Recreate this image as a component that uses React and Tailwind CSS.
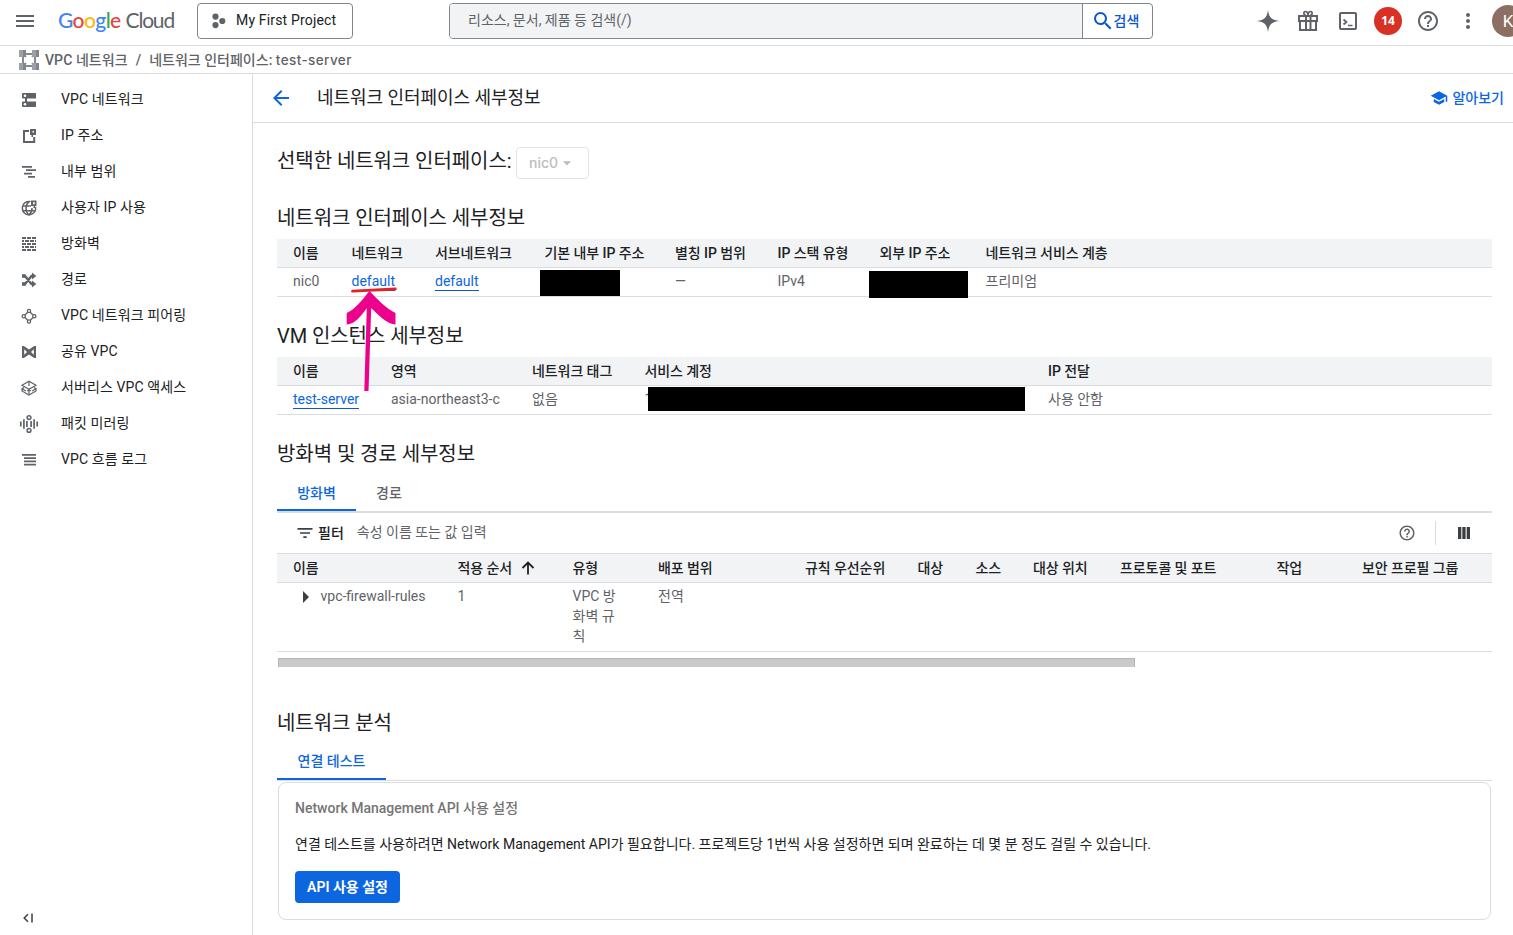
import React from "react"
import {
    MdArrowBack,
    MdArrowDropDown,
    MdFilterList,
    MdHelpOutline,
    MdMenu,
    MdMoreVert,
    MdSchool,
    MdSearch,
} from "react-icons/md"

const NAV = [
    { icon: "vpc", label: "VPC 네트워크" },
    { icon: "ip", label: "IP 주소" },
    { icon: "range", label: "내부 범위" },
    { icon: "globe", label: "사용자 IP 사용" },
    { icon: "firewall", label: "방화벽" },
    { icon: "route", label: "경로" },
    { icon: "peering", label: "VPC 네트워크 피어링" },
    { icon: "shared", label: "공유 VPC" },
    { icon: "serverless", label: "서버리스 VPC 액세스" },
    { icon: "mirror", label: "패킷 미러링" },
    { icon: "logs", label: "VPC 흐름 로그" },
]

/* 18x18 glyphs used in the side navigation */
const GLYPHS = {
    vpc: (
        <>
            <path d="M3 2h13v5.500H7v3h9V16H3a1 1 0 0 1-1-1v-3.500a1 1 0 0 1 1-1h2v-3H3a1 1 0 0 1-1-1V3a1 1 0 0 1 1-1z" />
            <circle cx="5" cy="4.800" r="1.300" fill="#fff" />
            <circle cx="5" cy="13.200" r="1.300" fill="#fff" />
        </>
    ),
    ip: (
        <>
            <path d="M9 4H4v11h10.200v-5" fill="none" stroke="currentColor" strokeWidth="2" />
            <path fillRule="evenodd" d="M10 2h6v6h-3v2h-1.500V8H10zM12.500 4v1.500H14V4z" />
        </>
    ),
    range: <path d="M2 3h10v1.700H2zM6 6.300h10V8H6zM4 9.700h8v1.700H4zM8 13h7v1.700H8z" />,
    globe: (
        <>
            <g fill="none" stroke="currentColor" strokeWidth="1.500">
                <path d="M10.500 2.600A6.700 6.700 0 1 0 15.600 8" />
                <path d="M9 2.600C5 6 5 12.500 9 16c2.200-2 3.200-4.400 3-7M2.600 7H11M2.600 11.700h12.800" />
            </g>
            <path fillRule="evenodd" d="M11 1.500h5.500V7H15v2h-1.500V7H11zM13 3.300v1.900h1.800V3.300z" />
        </>
    ),
    firewall: (
        <path d="M2 2h4v2H2zM7 2h4v2H7zM12 2h4v2h-4zM2 5h2v2H2zM5 5h4v2H5zM10 5h4v2h-4zM15 5h1v2h-1zM2 8h4v2H2zM7 8h4v2H7zM12 8h4v2h-4zM2 11h2v2H2zM5 11h4v2H5zM10 11h4v2h-4zM15 11h1v2h-1zM2 14h4v2H2zM7 14h4v2H7zM12 14h4v2h-4z" />
    ),
    route: (
        <>
            <path d="M2.500 5H5l6.500 8H14M2.500 13H5l6.500-8H14" fill="none" stroke="currentColor" strokeWidth="2.400" />
            <path d="M12 1.500 16.300 5 12 8.500zM12 9.500l4.300 3.500-4.300 3.500zM2 3.200h3.600v3.600H2zM2 11.200h3.600v3.600H2z" />
        </>
    ),
    peering: (
        <g fill="none" stroke="currentColor" strokeWidth="1.300">
            <circle cx="9" cy="4" r="1.600" />
            <circle cx="9" cy="14.500" r="1.600" />
            <circle cx="3.700" cy="9.200" r="1.600" />
            <circle cx="14.300" cy="9.200" r="1.600" />
            <path d="M7.700 5.200 5 8M10.300 5.200 13 8M5 10.500l2.700 2.800M13 10.500l-2.700 2.800" />
        </g>
    ),
    shared: (
        <path fillRule="evenodd" d="M2 3h1.800L9 6.500 14.200 3H16v12h-1.800L9 11.500 3.800 15H2zM4.200 6.300v5.400L7 9zM13.800 6.300 11 9l2.800 2.700z" />
    ),
    serverless: (
        <g fill="none" stroke="currentColor" strokeWidth="1.200">
            <path d="M2 6.300 9 2.200l7 4.100-7 4zM4 8.500l-2 1.200v2.200L9 16l7-4.100V9.700l-2-1.200M2 9.700l4 2.300M16 9.700 12 12" />
            <path d="M9 2.500V7M9 10.500V15M7.300 12.200 9 10.500l1.700 1.700" />
        </g>
    ),
    mirror: (
        <g fill="none" stroke="currentColor" strokeWidth="1.700">
            <path d="M.8 6.500v5M3.900 4.300v9.400M6.900 6v6M11.100 6v6M14.100 4.300v9.400M17.200 6.500v5" />
            <circle cx="9" cy="2.600" r="1.900" strokeWidth="1.500" />
            <circle cx="9" cy="15.400" r="1.900" strokeWidth="1.500" />
        </g>
    ),
    logs: <path d="M2 3h14v1.800H2zM4 6.200h12V8H4zM4 9.600h12v1.700H4zM4 12.700h12v1.700H4z" />,
}

function NavIcon({ name }) {
    return (
        <svg viewBox="0 0 18 18" className="mt-px size-[18px] shrink-0 overflow-visible text-[#5f6368]" fill="currentColor">
            {GLYPHS[name]}
        </svg>
    )
}

function Logo() {
    return (
        <div className="ml-[21px] flex w-[139px] items-baseline font-[Lato,sans-serif] text-[21px] leading-6">
            <span className="font-medium tracking-[-0.6px]">
                <span className="text-[#4285f4]">G</span>
                <span className="text-[#ea4335]">o</span>
                <span className="text-[#fbbc04]">o</span>
                <span className="text-[#4285f4]">g</span>
                <span className="text-[#34a853]">l</span>
                <span className="text-[#ea4335]">e</span>
            </span>
            <span className="ml-[5px] tracking-[-1.2px] text-[#5f6368]">Cloud</span>
        </div>
    )
}

function TopBar() {
    return (
        <header className="flex h-[46px] shrink-0 items-start overflow-hidden border-b border-[#dadce0] text-[#5f6368]">
            <MdMenu className="mt-[9px] ml-[13px] size-6 shrink-0" />
            <div className="mt-2">
                <Logo />
            </div>
            <button className="mt-[3px] flex h-9 w-[156px] shrink-0 items-center rounded border border-[#80868b] pl-[13px] text-[#202124]">
                <svg viewBox="0 0 16 16" className="size-4 fill-[#5f6368]">
                    <circle cx="4.500" cy="3.600" r="3.100" />
                    <circle cx="4.500" cy="12.100" r="3.100" />
                    <circle cx="11.300" cy="8" r="3.100" />
                </svg>
                <span className="-mt-[2px] ml-[9px] tracking-[0.17px] whitespace-nowrap">My First Project</span>
            </button>
            <div className="mt-[3px] ml-24 flex h-9 w-[704px] shrink-0 overflow-hidden rounded border border-[#80868b]">
                <div className="w-[633px] border-r border-[#80868b] bg-[#f1f3f4] pt-[6px] pl-[18px]">
                    리소스, 문서, 제품 등 검색(/)
                </div>
                <button className="flex items-center pl-2 font-medium text-[#0b57d0]">
                    <MdSearch className="size-6" />
                    <span className="-ml-[1.5px]">검색</span>
                </button>
            </div>
            <div className="mt-[5px] ml-[99px] flex shrink-0 items-center gap-2">
                <svg viewBox="0 0 32 32" className="size-8" fill="currentColor">
                    <path d="M16 5c1 7.500 3.500 10 11 11-7.500 1-10 3.500-11 11-1-7.500-3.500-10-11-11 7.500-1 10-3.500 11-11z" />
                </svg>
                <svg viewBox="0 0 32 32" className="size-8" fill="none" stroke="currentColor" strokeWidth="2">
                    <path d="M7 11h18v5H7zM8 16v9h16v-9M14 11v14M18.500 11v14" />
                    <path d="M16 11c-5 0-5-4.500-2.500-4.500C15.500 6.500 16 9 16 11c0-2 .5-4.500 2.500-4.500C21 6.500 21 11 16 11z" strokeWidth="1.700" />
                </svg>
                <svg viewBox="0 0 32 32" className="size-8" fill="none" stroke="currentColor" strokeWidth="2">
                    <rect x="8" y="8" width="16" height="16" rx="1" />
                    <path d="m11.500 14.500 3 2.500-3 2.500M16 20.500h4.500" strokeWidth="1.700" />
                </svg>
                <div className="flex size-8 items-center justify-center">
                    <span className="flex size-7 items-center justify-center rounded-full bg-[#d93025] font-['Open_Sans',sans-serif] text-[12px] font-bold text-white">
                        14
                    </span>
                </div>
                <div className="flex size-8 items-center justify-center">
                    <MdHelpOutline className="size-6" />
                </div>
                <div className="flex size-8 items-center justify-center">
                    <MdMoreVert className="size-6" />
                </div>
                <div className="flex size-8 items-center justify-center rounded-full bg-[#8d6e63] text-[17px] text-white">
                    K
                </div>
            </div>
        </header>
    )
}

function Breadcrumb() {
    return (
        <div className="flex h-7 shrink-0 items-start border-b border-[#dadce0] pl-[19px] font-medium text-[#5f6368]">
            <svg viewBox="0 0 20 20" className="mt-1 size-5">
                <path d="M7 4h6M7 16h6M4 7v6M16 7v6M7 7l-1-1M13 7l1-1M7 13l-1 1M13 13l1 1" stroke="#5f6368" strokeWidth="1.500" fill="none" />
                <path d="M0 0h7v7H0zM13 0h7v7h-7zM0 13h7v7H0zM13 13h7v7h-7z" fill="#9aa0a6" />
                <path d="M4 0h3v7H4zM17 0h3v7h-3zM4 13h3v7H4zM17 13h3v7h-3z" fill="#80868b" />
            </svg>
            <span className="mt-[4px] ml-[6px] tracking-[0.08px]">VPC 네트워크</span>
            <span className="mt-[4px] ml-2">/</span>
            <span className="mt-[4px] ml-2">
                네트워크 인터페이스: <span className="font-[Inter,sans-serif] text-[13.5px] tracking-[0.4px]">test-server</span>
            </span>
        </div>
    )
}

function Sidebar() {
    return (
        <nav className="flex w-[253px] shrink-0 flex-col border-r border-[#dadce0] pt-[7px] text-[#202124]">
            {NAV.map((item) => (
                <a key={item.icon} className="flex h-9 items-center pl-5">
                    <NavIcon name={item.icon} />
                    <span className="ml-[23px] tracking-[0.1px]">{item.label}</span>
                </a>
            ))}
            <svg viewBox="0 0 12 12" className="mt-auto mb-[11px] ml-[22px] size-3" fill="none" stroke="#3c4043" strokeWidth="1.500">
                <path d="M6 2.200 2.200 6 6 9.800M10 1.500v9" />
            </svg>
        </nav>
    )
}

function Heading({ children }) {
    return <h2 className="text-[20px] leading-6 tracking-[-0.07px] text-[#202124]">{children}</h2>
}

function Link({ children }) {
    return <a className="border-b border-[#0b57d0] pb-px text-[#0b66e0]">{children}</a>
}

function Redacted({ className }) {
    return <span className={`absolute bg-black ${className}`} />
}

const HEAD_ROW = "grid h-[29px] items-center border-b border-[#dadce0] bg-[#f1f3f4] px-4 font-medium tracking-[-0.08px] text-[#202124] whitespace-nowrap"
const BODY_ROW = "grid h-[29px] items-start border-b border-[#dadce0] px-4 pt-[3px] text-[#5f6368] whitespace-nowrap"

function InterfaceTable() {
    const cols = "grid-cols-[58.5px_83.5px_109.5px_130.5px_102.5px_102px_106px_1fr]"
    return (
        <div className="mt-[9px]">
            <div className={`${HEAD_ROW} ${cols}`}>
                <span>이름</span>
                <span>네트워크</span>
                <span>서브네트워크</span>
                <span>기본 내부 IP 주소</span>
                <span>별칭 IP 범위</span>
                <span>IP 스택 유형</span>
                <span>외부 IP 주소</span>
                <span>네트워크 서비스 계층</span>
            </div>
            <div className={`${BODY_ROW} ${cols}`}>
                <span>nic0</span>
                <span className="relative">
                    <Link>default</Link>
                    <Marker />
                </span>
                <span><Link>default</Link></span>
                <span className="relative"><Redacted className="top-[-1.5px] left-[-4.5px] h-[26.5px] w-20" /></span>
                <span>—</span>
                <span>IPv4</span>
                <span className="relative"><Redacted className="top-0 left-[-10.5px] h-[27px] w-[99px]" /></span>
                <span>프리미엄</span>
            </div>
        </div>
    )
}

/* Hand-drawn underline and arrow pointing at the network link */
function Marker() {
    return (
        <svg viewBox="0 0 56 110" className="absolute top-[14px] left-[-6.5px] z-10 h-[110px] w-14">
            <path d="M24.500 6C31 13 41 23.500 50.500 28v11.500c-8-.2-16-8.500-24.300-16.500L23.500 106h-4.200L21.800 23C17 30 9.500 39.500 1.700 39.500V28C9.500 25 18 14 24.500 6z" fill="#ec008c" />
            <path d="M7.500 6.200 50.300 4" stroke="#e3212b" strokeWidth="2.800" strokeLinecap="round" />
        </svg>
    )
}

function InstanceTable() {
    const cols = "grid-cols-[98px_141px_112.5px_403.5px_1fr]"
    return (
        <div className="mt-[9px]">
            <div className={`${HEAD_ROW} ${cols}`}>
                <span>이름</span>
                <span>영역</span>
                <span>네트워크 태그</span>
                <span>서비스 계정</span>
                <span>IP 전달</span>
            </div>
            <div className={`${BODY_ROW} ${cols}`}>
                <span><Link>test-server</Link></span>
                <span>asia-northeast3-c</span>
                <span>없음</span>
                <span className="relative">
                    1<Redacted className="top-[-2.5px] left-[3.5px] h-[24px] w-[377px]" />
                </span>
                <span>사용 안함</span>
            </div>
        </div>
    )
}

function FirewallTable() {
    const cols = "grid-cols-[164.5px_115px_85.5px_147px_112.5px_58px_57.5px_87px_156.5px_85.5px_1fr]"
    return (
        <div>
            <div className="flex h-[41px] items-center border-b border-[#dadce0] text-[#5f6368]">
                <MdFilterList className="ml-[18px] size-5 text-[#3c4043]" />
                <span className="-mt-px ml-[3px] font-medium text-[#202124]">필터</span>
                <span className="ml-[13px] -mt-[2px]">속성 이름 또는 값 입력</span>
                <MdHelpOutline className="ml-auto size-[18px]" />
                <span className="ml-[19px] h-6 w-px bg-[#dadce0]" />
                <svg viewBox="0 0 12 12" className="mr-[22px] ml-[22px] size-3 fill-[#3c4043]">
                    <path d="M0 0h3.300v12H0zM4.300 0h3.300v12H4.300zM8.700 0H12v12H8.700z" />
                </svg>
            </div>
            <div className={`${HEAD_ROW} ${cols}`}>
                <span>이름</span>
                <span className="flex items-center">
                    적용 순서
                    <svg viewBox="0 0 18 18" className="ml-[6.5px] size-[18px]" fill="none" stroke="currentColor" strokeWidth="1.800">
                        <path d="M9 15.500V4M3.500 9 9 3.500 14.500 9" />
                    </svg>
                </span>
                <span>유형</span>
                <span>배포 범위</span>
                <span>규칙 우선순위</span>
                <span>대상</span>
                <span>소스</span>
                <span>대상 위치</span>
                <span>프로토콜 및 포트</span>
                <span>작업</span>
                <span>보안 프로필 그룹</span>
            </div>
            <div className={`grid h-[69px] items-start border-b border-[#dadce0] px-4 pt-[3px] text-[#5f6368] ${cols}`}>
                <span className="flex items-center">
                    <svg viewBox="0 0 6 12" className="mt-[2px] ml-[10px] h-3 w-1.5 fill-[#3c4043]">
                        <path d="M0 0 6 6 0 12z" />
                    </svg>
                    <span className="ml-[11.500px]">vpc-firewall-rules</span>
                </span>
                <span>1</span>
                <span className="w-[46px] break-all">VPC 방화벽 규칙</span>
                <span>전역</span>
            </div>
            <div className="mt-[6px] ml-px h-[9px] w-[857px] border-t border-x border-[#b5b5b5] bg-[#cacaca]" />
        </div>
    )
}

function AnalysisCard() {
    return (
        <div className="mt-px mr-px ml-px h-[138px] rounded-lg border border-[#dadce0] px-4 pt-[15px]">
            <div className="font-medium text-[#757575]">Network Management API 사용 설정</div>
            <p className="mt-4 text-[#202124]">
                연결 테스트를 사용하려면 Network Management API가 필요합니다. 프로젝트당 1번씩 사용 설정하면 되며 완료하는 데 몇 분 정도 걸릴 수 있습니다.
            </p>
            <button className="mt-[17px] flex h-8 w-[105px] items-center justify-center rounded bg-[#0b66e0] font-semibold whitespace-nowrap text-white">
                API 사용 설정
            </button>
        </div>
    )
}

export default function App() {
    return (
        <div className="flex h-[935px] w-[1513px] flex-col overflow-hidden bg-white font-[Roboto,'Noto_Sans_CJK_KR',sans-serif] text-sm leading-5">
            <TopBar />
            <Breadcrumb />
            <div className="flex min-h-0 flex-1">
                <Sidebar />
                <main className="min-w-0 flex-1">
                    <div className="flex h-[49px] items-center border-b border-[#dadce0] pr-[9px] pl-4">
                        <MdArrowBack className="size-6 text-[#0b66e0]" />
                        <h1 className="ml-6 text-[18px] leading-6 tracking-[-0.05px] text-[#202124]">네트워크 인터페이스 세부정보</h1>
                        <a className="ml-auto flex items-center font-medium text-[#0b66e0]">
                            <MdSchool className="mr-1 size-[18px]" />
                            알아보기
                        </a>
                    </div>
                    <div className="pr-[21px] pl-6">
                        <div className="mt-6 flex h-8 items-start">
                            <div className="mt-[2px]"><Heading>선택한 네트워크 인터페이스:</Heading></div>
                            <button className="ml-1 flex h-8 w-[73px] items-center rounded border border-[#e3e3e3] pl-[12.5px] text-[#bdbdbd]">
                                <span className="font-[Inter,sans-serif] font-medium">nic0</span>
                                <MdArrowDropDown className="size-5 -ml-px" />
                            </button>
                        </div>
                        <div className="mt-[27px]"><Heading>네트워크 인터페이스 세부정보</Heading></div>
                        <InterfaceTable />
                        <div className="mt-[27px]"><Heading>VM 인스턴스 세부정보</Heading></div>
                        <InstanceTable />
                        <div className="mt-[27px]"><Heading>방화벽 및 경로 세부정보</Heading></div>
                        <div className="mt-[9px] flex h-[38px] border-b-2 border-[#dadce0] font-medium">
                            <div className="h-9 w-[79px] border-b-2 border-[#0b66e0] pt-2 text-center text-[#0b66e0]">방화벽</div>
                            <div className="pt-2 pl-5 text-[#5f6368]">경로</div>
                        </div>
                        <FirewallTable />
                        <div className="mt-11"><Heading>네트워크 분석</Heading></div>
                        <div className="mt-2 flex h-[38px] border-b border-[#dadce0] font-medium">
                            <div className="h-[37px] w-[109px] border-b-2 border-[#0b66e0] pt-2 text-center text-[#0b66e0]">연결 테스트</div>
                        </div>
                        <AnalysisCard />
                    </div>
                </main>
            </div>
        </div>
    )
}
